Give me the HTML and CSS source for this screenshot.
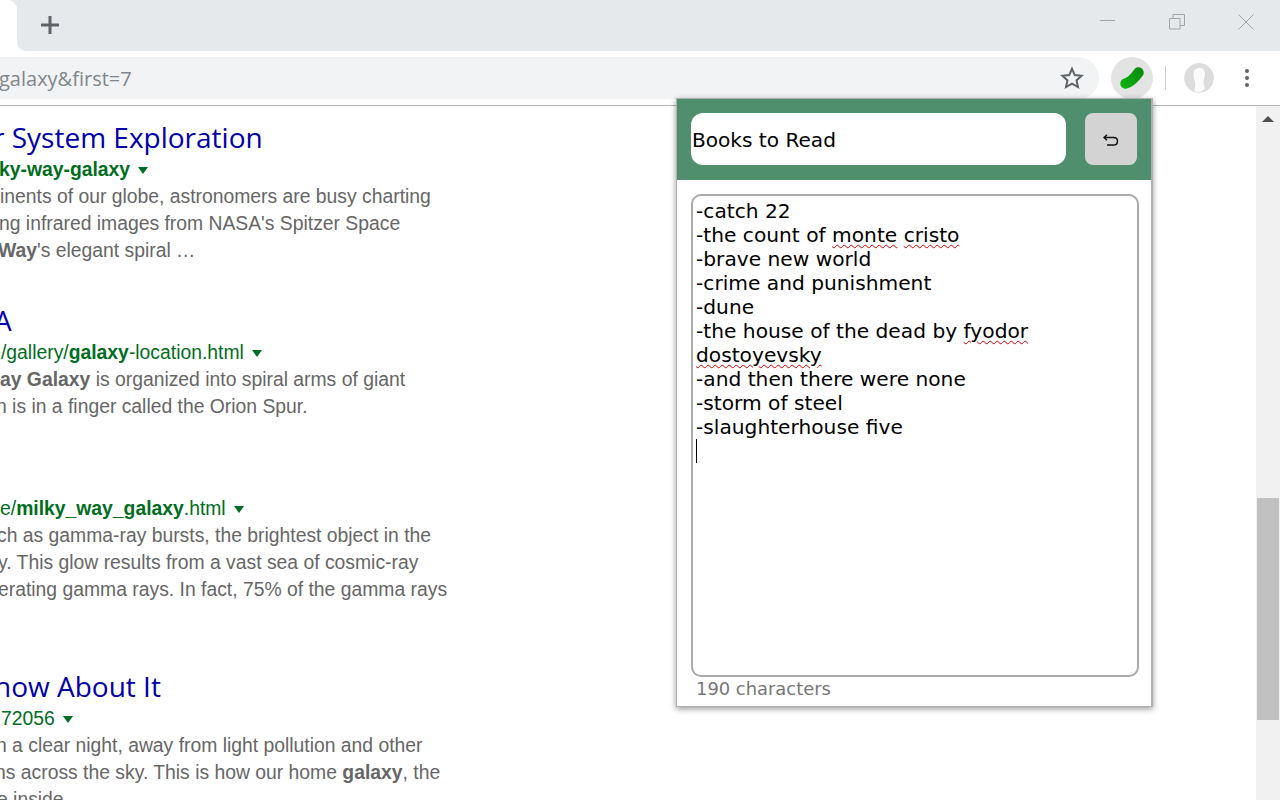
FILE: index.html
```html
<!DOCTYPE html>
<html lang="en">
<head>
<meta charset="utf-8">
<title>Galaxy search</title>
<link rel="stylesheet" href="styles.css">
</head>
<body>
<div class="browser">
  <header class="tabstrip">
    <div class="tab"></div>
    <div class="strip-rest">
      <svg class="newtab" width="18" height="18" viewBox="0 0 18 18"><path d="M9 0v18M0 9h18" fill="none" stroke="#5f6368" stroke-width="3"/></svg>
      <div class="winctl">
        <svg width="16" height="16" viewBox="0 0 16 16"><path d="M0 6.500h15" stroke="#a0a3a7" stroke-width="1" fill="none"/></svg>
        <svg width="16" height="16" viewBox="0 0 16 16"><path d="M.5 4.500h10.500v10.500h-10.500zM4 4.500v-4h11.500v11h-4.500" stroke="#a0a3a7" stroke-width="1" fill="none"/></svg>
        <svg width="16" height="16" viewBox="0 0 16 16"><path d="M.5.5l15 15M15.500.5l-15 15" stroke="#a0a3a7" stroke-width="1" fill="none"/></svg>
      </div>
    </div>
  </header>
  <div class="toolbar">
    <div class="omnibox">
      <span class="url">galaxy&amp;first=7</span>
      <svg class="star" width="24" height="24" viewBox="0 0 24 24"><path d="M12 2.800l2.800 6.300 6.800.7-5.100 4.600 1.500 6.700-6-3.500-6 3.500 1.500-6.700-5.100-4.600 6.800-.7z" fill="none" stroke="#5f6368" stroke-width="2"/></svg>
    </div>
    <div class="ext-btn">
      <svg width="30" height="26" viewBox="0 0 30 26"><defs><linearGradient id="pk" gradientUnits="userSpaceOnUse" x1="4" y1="24" x2="26" y2="2"><stop offset="0" stop-color="#0cb80c"/><stop offset="1" stop-color="#0a8612"/></linearGradient></defs><path d="M8.500 18.500C14 17 17 14 21.500 7.500" fill="none" stroke="url(#pk)" stroke-width="10.500" stroke-linecap="round"/></svg>
    </div>
    <div class="sep"></div>
    <div class="avatar">
      <svg width="30" height="30" viewBox="0 0 30 30"><circle cx="15" cy="15" r="15" fill="#dcdcdc"/><path d="M15.500 5c3.500 0 5.500 2 5.500 5.500 0 3.500-1.500 6-1.500 9 0 2 .5 4 1.500 6-2 2-4 3.500-6 3.500s-3.500-.5-5-1.500c1-2 1.500-5 1-8-.5-2.500-1.500-5-1.500-8.500 0-3.500 2.500-6 6-6z" fill="#fbfbfb"/></svg>
    </div>
    <div class="menu"><i></i><i></i><i></i></div>
  </div>
  <div class="main">
    <div class="results">
      <section class="result r1">
        <div class="title off-7">r System Exploration</div>
        <div class="rurl off-1"><b>ky-way-galaxy</b><span class="caret"></span></div>
        <div class="line">inents of our globe, astronomers are busy charting</div>
        <div class="line off-1">ng infrared images from NASA's Spitzer Space</div>
        <div class="line off-2"><b>Way</b>'s elegant spiral …</div>
      </section>
      <section class="result r2">
        <div class="title off-6">A</div>
        <div class="rurl on-1">/gallery/<b>galaxy</b>-location.html<span class="caret"></span></div>
        <div class="line"><b>ay Galaxy</b> is organized into spiral arms of giant</div>
        <div class="line off-4">n is in a finger called the Orion Spur.</div>
      </section>
      <section class="result r3">
        <div class="title"></div>
        <div class="rurl">e/<b>milky_way_galaxy</b>.html<span class="caret"></span></div>
        <div class="line off-3">ch as gamma-ray bursts, the brightest object in the</div>
        <div class="line off-2">y. This glow results from a vast sea of cosmic-ray</div>
        <div class="line off-2">erating gamma rays. In fact, 75% of the gamma rays</div>
      </section>
      <section class="result r4">
        <div class="title off-6">how About It</div>
        <div class="rurl on-1">72056<span class="caret"></span></div>
        <div class="line off-4">n a clear night, away from light pollution and other</div>
        <div class="line off-5">ns across the sky. This is how our home <b>galaxy</b>, the</div>
        <div class="line off-3">e inside</div>
      </section>
    </div>
    <div class="scrollbar">
      <svg class="sb-up" width="12" height="6" viewBox="0 0 12 6"><path d="M6 0l6 6H0z" fill="#505050"/></svg>
      <div class="sb-thumb"></div>
    </div>
  </div>
  <aside class="popup">
    <div class="pop-head">
      <div class="pop-title">Books to Read</div>
      <button class="pop-undo" type="button" aria-label="Undo">
        <svg width="16" height="14" viewBox="0 0 16 14"><path d="M1 3.500h9.500c2.500 0 4 1.500 4 3.700s-1.500 3.800-4 3.800H4M4 .8L1 3.500l3 2.700" fill="none" stroke="#111" stroke-width="1.400"/></svg>
      </button>
    </div>
    <div class="pop-body">
      <div class="note">
        <div>-catch 22</div>
        <div>-the count of <span class="sp">monte</span> <span class="sp">cristo</span></div>
        <div>-brave new world</div>
        <div>-crime and punishment</div>
        <div>-dune</div>
        <div>-the house of the dead by <span class="sp">fyodor</span></div>
        <div><span class="sp">dostoyevsky</span></div>
        <div>-and then there were none</div>
        <div>-storm of steel</div>
        <div>-slaughterhouse five</div>
        <div class="cursor-line"><span class="cursor"></span></div>
      </div>
      <div class="count">190 characters</div>
    </div>
  </aside>
</div>
</body>
</html>
```
FILE: styles.css
```css
* { box-sizing: border-box; }
html, body { margin: 0; padding: 0; background: #fff; }
.browser { position: relative; width: 1280px; height: 800px; overflow: hidden; display: flex; flex-direction: column; background: #fff; }

.tabstrip { display: flex; height: 51px; flex: none; background: linear-gradient(#e6e9ec 20px, #fff 20px); }
.tab { width: 17px; background: #fff; border-top-right-radius: 9px; }
.strip-rest { flex: 1; display: flex; align-items: flex-start; justify-content: space-between; background: #e6e9ec; border-bottom-left-radius: 9px; padding: 16px 26px 0 24px; }
.newtab { display: block; }
.winctl { display: flex; gap: 53px; margin-top: -2px; }
.winctl svg { display: block; }

.toolbar { height: 55px; flex: none; display: flex; align-items: center; padding: 0 0 1px 0; border-bottom: 1px solid #b4b4b4; }
.omnibox { width: 1099px; height: 42px; background: #f1f3f4; border-radius: 0 21px 21px 0; display: flex; align-items: center; justify-content: space-between; padding-right: 15px; overflow: hidden; }
.url { font: 20px/42px "Open Sans", sans-serif; color: #80868b; margin: 2px 0 0 -1px; white-space: nowrap; }
.star { display: block; }
.ext-btn { width: 42px; height: 42px; margin-left: 12px; border-radius: 50%; background: #e3e3e3; display: flex; align-items: center; justify-content: center; }
.ext-btn svg { display: block; }
.sep { width: 1px; height: 24px; margin-left: 12px; background: #d0d0d0; }
.avatar { width: 30px; height: 30px; margin-left: 18px; border-radius: 50%; overflow: hidden; }
.avatar svg { display: block; }
.menu { margin-left: 30px; display: flex; flex-direction: column; gap: 3px; width: 6px; }
.menu i { display: block; width: 4px; height: 4px; margin: 0 auto; border-radius: 50%; background: #5f6368; }

.main { flex: 1; min-height: 0; display: flex; }
.results { flex: 1; min-width: 0; overflow: hidden; padding-top: 11px; }
.result { white-space: nowrap; }
.r2 { margin-top: 36px; }
.r3 { margin-top: 36px; }
.r4 { margin-top: 63px; }
.title { height: 40px; font: 28px/40px "Open Sans", sans-serif; color: #0000a8; }
.rurl { height: 26px; font: 19.330px/25px "Liberation Sans", sans-serif; color: #006d21; }
.rurl b { font-weight: 700; }
.caret { display: inline-block; width: 0; height: 0; margin-left: 8px; vertical-align: 2px; border-left: 5.500px solid transparent; border-right: 5.500px solid transparent; border-top: 7px solid #006d21; }
.line { height: 27px; font: 19.330px/27px "Liberation Sans", sans-serif; color: #666; }
.line b { font-weight: 700; }
.off-1 { margin-left: -1px; }
.off-2 { margin-left: -2px; }
.off-3 { margin-left: -3px; }
.off-4 { margin-left: -4px; }
.off-5 { margin-left: -5px; }
.off-6 { margin-left: -6px; }
.off-7 { margin-left: -7px; }
.on-1 { margin-left: 1px; }

.scrollbar { width: 24px; flex: none; background: #f1f1f1; padding: 10px 1px 0; display: flex; flex-direction: column; }
.sb-up { display: block; margin: 0 auto; flex: none; }
.sb-thumb { width: 22px; height: 222px; margin-top: 376px; background: #c1c1c1; flex: none; }

.popup { position: absolute; left: 676px; top: 98px; width: 477px; height: 609px; background: #fff; border: 1px solid #b0b0b0; border-right-width: 2px; box-shadow: 0 2px 6px rgba(0,0,0,.4); display: flex; flex-direction: column; }
.pop-head { height: 81px; flex: none; background: #4f8f6d; display: flex; align-items: flex-start; padding: 14px 14px 0; gap: 19px; }
.pop-title { width: 375px; height: 52px; background: #fff; border-radius: 12px; padding-left: 1px; font: 20.100px/54px "DejaVu Sans", Verdana, sans-serif; color: #000; }
.pop-undo { width: 52px; height: 52px; padding: 0; border: 0; border-radius: 8px; background: #d3d3d3; display: flex; align-items: center; justify-content: center; }
.pop-undo svg { display: block; margin-top: 4px; }
.pop-body { flex: 1; padding: 14px 13px 0 14px; display: flex; flex-direction: column; }
.note { width: 448px; height: 483px; border: 2px solid #a9a9a9; border-radius: 10px; padding: 3px; font: 20.200px/24px "DejaVu Sans", Verdana, sans-serif; color: #000; }
.sp { text-decoration: underline wavy #e00000 1px; text-underline-offset: 2px; }
.cursor-line { height: 24px; }
.cursor { display: block; width: 1px; height: 24px; background: #000; }
.count { margin: 1px 0 0 5px; font: 17.900px/22px "DejaVu Sans", Verdana, sans-serif; color: #777; }
```
